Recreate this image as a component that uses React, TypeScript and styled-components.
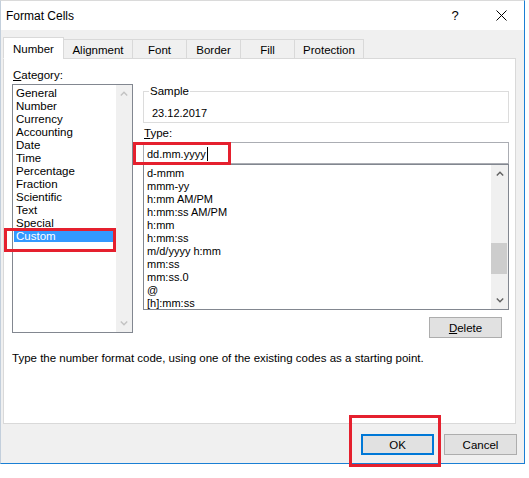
import React from 'react'
import styled, { createGlobalStyle } from 'styled-components'

const GlobalStyle = createGlobalStyle`
  html, body {
    margin: 0;
    padding: 0;
    background: #ffffff;
  }
  body {
    font-family: 'Liberation Sans', Arial, sans-serif;
    font-size: 11.5px;
    color: #000;
  }
  * {
    box-sizing: border-box;
  }
`

const Screen = styled.div`
  position: relative;
  width: 529px;
  height: 478px;
  overflow: hidden;
  background: #fff;
`

const Dialog = styled.div`
  width: 525px;
  height: 464px;
  display: flex;
  flex-direction: column;
  background: #f0f0f0;
  border-top: 1px solid #dadada;
  border-left: 1px solid #c3cfdc;
  border-right: 1px solid #1a7fd4;
  border-bottom: 1px solid #1a7fd4;
`

const TitleBar = styled.div`
  height: 29px;
  flex: none;
  display: flex;
  align-items: center;
  background: #fff;
  padding-left: 5px;
`

const Title = styled.div`
  flex: 1;
  font-size: 12px;
  padding-top: 1px;
`

const CaptionButton = styled.div`
  width: 46px;
  height: 29px;
  display: flex;
  align-items: center;
  justify-content: center;
  font-size: 13px;
`

const Body = styled.div`
  flex: 1;
  display: flex;
  flex-direction: column;
  padding: 7px 7px 0 2px;
`

const TabRow = styled.div`
  position: relative;
  z-index: 1;
  display: flex;
  align-items: flex-end;
  height: 22px;
  margin-bottom: -1px;
`

const Tab = styled.div<{ $active?: boolean; $w: number }>`
  width: ${(p) => p.$w}px;
  height: ${(p) => (p.$active ? 22 : 20)}px;
  display: flex;
  align-items: center;
  justify-content: center;
  padding-top: ${(p) => (p.$active ? 2 : 1)}px;
  background: ${(p) => (p.$active ? '#fff' : '#f0f0f0')};
  border: 1px solid #d9d9d9;
  border-bottom-color: ${(p) => (p.$active ? '#fff' : '#d9d9d9')};
  & + & {
    margin-left: -1px;
  }
`

const Panel = styled.div`
  width: 513px;
  height: 366px;
  flex: none;
  display: flex;
  flex-direction: column;
  background: #fff;
  border: 1px solid #d9d9d9;
  padding: 10px 5px 0 8px;
`

const Columns = styled.div`
  display: flex;
  gap: 10px;
`

const Column = styled.div<{ $w: number }>`
  width: ${(p) => p.$w}px;
  display: flex;
  flex-direction: column;
`

const Label = styled.div<{ $mt?: number }>`
  line-height: 13px;
  height: 13px;
  padding-left: 1px;
  margin-top: ${(p) => p.$mt ?? 0}px;
`

const ListBox = styled.div<{ $h: number; $mt: number }>`
  height: ${(p) => p.$h}px;
  margin-top: ${(p) => p.$mt}px;
  display: flex;
  border: 1px solid #828790;
  background: #fff;
`

const Items = styled.div<{ $pad: string }>`
  flex: 1;
  padding: ${(p) => p.$pad};
  overflow: hidden;
`

const CategoryItem = styled.div<{ $selected?: boolean }>`
  height: 13px;
  line-height: 14px;
  padding-left: 2px;
  white-space: nowrap;
  background: ${(p) => (p.$selected ? '#3399ff' : 'transparent')};
  color: ${(p) => (p.$selected ? '#fff' : '#000')};
`

const TypeItem = styled.div`
  height: 13px;
  line-height: 13px;
  font-size: 11px;
  white-space: nowrap;
`

const Scrollbar = styled.div<{ $w: number }>`
  width: ${(p) => p.$w}px;
  flex: none;
  display: flex;
  flex-direction: column;
  background: #f0f0f0;
`

const ArrowButton = styled.div`
  height: 17px;
  flex: none;
  display: flex;
  align-items: center;
  justify-content: center;
`

const Track = styled.div<{ $offset: number }>`
  flex: 1;
  padding-top: ${(p) => p.$offset}px;
`

const Thumb = styled.div<{ $h: number }>`
  height: ${(p) => p.$h}px;
  margin: 0 1px 0 0;
  background: #cdcdcd;
`

const SampleBox = styled.fieldset`
  margin: 15px 0 0 0;
  padding: 0 0 2px 8px;
  border: 1px solid #dcdcdc;
  min-width: 0;
  legend {
    margin-left: -3px;
    padding: 0 1px;
    line-height: 15px;
  }
`

const SampleValue = styled.div`
  margin-top: 7px;
  line-height: 14px;
  font-size: 11px;
`

const TypeInput = styled.div`
  height: 22px;
  margin-top: 2px;
  border: 1px solid #abadb3;
  display: flex;
  align-items: center;
  padding: 1px 0 0 3px;
  font-size: 11px;
`

const Caret = styled.span`
  display: inline-block;
  width: 1px;
  height: 14px;
  margin-left: 1px;
  background: #000;
`

const Button = styled.div<{ $primary?: boolean }>`
  width: 73px;
  height: 21px;
  flex: none;
  display: flex;
  align-items: center;
  justify-content: center;
  background: #e1e1e1;
  border: ${(p) => (p.$primary ? '2px solid #0078d7' : '1px solid #adadad')};
`

const DeleteRow = styled.div`
  display: flex;
  justify-content: flex-end;
  margin-top: 7px;
  padding-right: 7px;
`

const Hint = styled.div`
  margin-top: 14px;
  line-height: 13px;
`

const Footer = styled.div`
  display: flex;
  justify-content: flex-end;
  gap: 10px;
  margin-top: 10px;
`

const Mark = styled.div<{ $x: number; $y: number; $w: number; $h: number }>`
  position: absolute;
  left: ${(p) => p.$x}px;
  top: ${(p) => p.$y}px;
  width: ${(p) => p.$w}px;
  height: ${(p) => p.$h}px;
  border: 3px solid #e5202e;
  pointer-events: none;
`

const Chevron = ({ up, color }: { up?: boolean; color: string }) => (
  <svg width="8" height="5" viewBox="0 0 8 5">
    <path
      d={up ? 'M0.8 4.4 L4 1.2 L7.2 4.4' : 'M0.8 0.6 L4 3.8 L7.2 0.6'}
      fill="none"
      stroke={color}
      strokeWidth="1.4"
    />
  </svg>
)

const CloseGlyph = () => (
  <svg width="11" height="11" viewBox="0 0 11 11">
    <path d="M0.5 0.5 L10.5 10.5 M10.5 0.5 L0.5 10.5" stroke="#000" strokeWidth="1" />
  </svg>
)

const tabs = [
  { name: 'Number', w: 61 },
  { name: 'Alignment', w: 70 },
  { name: 'Font', w: 55 },
  { name: 'Border', w: 55 },
  { name: 'Fill', w: 55 },
  { name: 'Protection', w: 70 },
]

const categories = [
  'General',
  'Number',
  'Currency',
  'Accounting',
  'Date',
  'Time',
  'Percentage',
  'Fraction',
  'Scientific',
  'Text',
  'Special',
  'Custom',
]

const formats = [
  'd-mmm',
  'mmm-yy',
  'h:mm AM/PM',
  'h:mm:ss AM/PM',
  'h:mm',
  'h:mm:ss',
  'm/d/yyyy h:mm',
  'mm:ss',
  'mm:ss.0',
  '@',
  '[h]:mm:ss',
]

export default function App() {
  return (
    <Screen>
      <GlobalStyle />
      <Dialog>
        <TitleBar>
          <Title>Format Cells</Title>
          <CaptionButton>?</CaptionButton>
          <CaptionButton>
            <CloseGlyph />
          </CaptionButton>
        </TitleBar>
        <Body>
          <TabRow>
            {tabs.map((t, i) => (
              <Tab key={t.name} $w={t.w} $active={i === 0}>
                {t.name}
              </Tab>
            ))}
          </TabRow>
          <Panel>
            <Columns>
              <Column $w={121}>
                <Label>
                  <u>C</u>ategory:
                </Label>
                <ListBox $h={249} $mt={2}>
                  <Items $pad="1px">
                    {categories.map((c) => (
                      <CategoryItem key={c} $selected={c === 'Custom'}>
                        {c}
                      </CategoryItem>
                    ))}
                  </Items>
                  <Scrollbar $w={16}>
                    <ArrowButton>
                      <Chevron up color="#c2c2c2" />
                    </ArrowButton>
                    <Track $offset={0} />
                    <ArrowButton>
                      <Chevron color="#c2c2c2" />
                    </ArrowButton>
                  </Scrollbar>
                </ListBox>
              </Column>
              <Column $w={366}>
                <SampleBox>
                  <legend>Sample</legend>
                  <SampleValue>23.12.2017</SampleValue>
                </SampleBox>
                <Label $mt={4}>
                  <u>T</u>ype:
                </Label>
                <TypeInput>
                  dd.mm.yyyy
                  <Caret />
                </TypeInput>
                <ListBox $h={146} $mt={0}>
                  <Items $pad="2px 0 0 3px">
                    {formats.map((f) => (
                      <TypeItem key={f}>{f}</TypeItem>
                    ))}
                  </Items>
                  <Scrollbar $w={17}>
                    <ArrowButton>
                      <Chevron up color="#606060" />
                    </ArrowButton>
                    <Track $offset={61}>
                      <Thumb $h={31} />
                    </Track>
                    <ArrowButton>
                      <Chevron color="#606060" />
                    </ArrowButton>
                  </Scrollbar>
                </ListBox>
                <DeleteRow>
                  <Button>
                    <u>D</u>elete
                  </Button>
                </DeleteRow>
              </Column>
            </Columns>
            <Hint>Type the number format code, using one of the existing codes as a starting point.</Hint>
          </Panel>
          <Footer>
            <Button $primary>OK</Button>
            <Button>Cancel</Button>
          </Footer>
        </Body>
      </Dialog>
      <Mark $x={4} $y={228} $w={112} $h={24} />
      <Mark $x={133} $y={142} $w={98} $h={23} />
      <Mark $x={349} $y={415} $w={92} $h={52} />
    </Screen>
  )
}
